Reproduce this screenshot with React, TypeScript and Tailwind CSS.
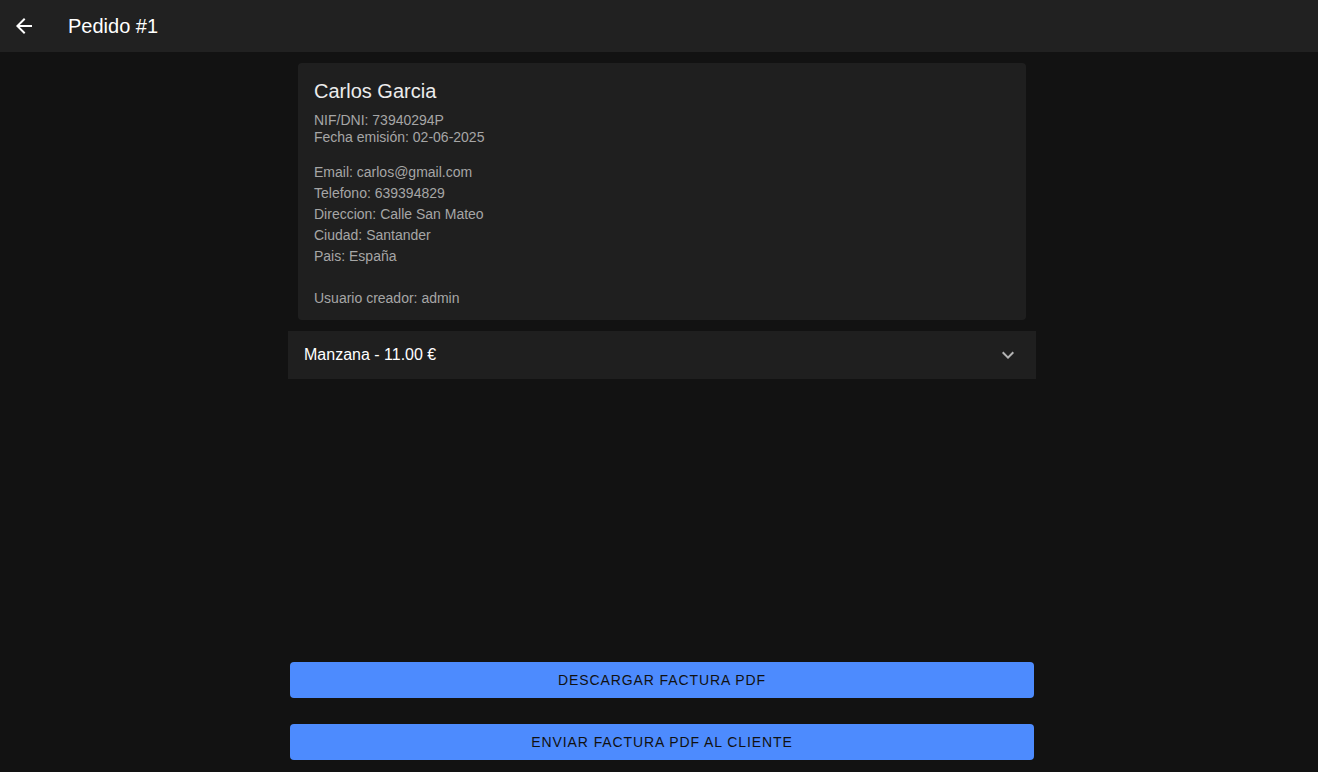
import React from 'react';

const ArrowBack = () => (
  <svg width="24" height="24" viewBox="0 0 24 24" fill="currentColor">
    <path d="M20 11H7.83l5.59-5.59L12 4l-8 8 8 8 1.41-1.41L7.83 13H20v-2z" />
  </svg>
);

const ExpandMore = () => (
  <svg width="24" height="24" viewBox="0 0 24 24" fill="currentColor">
    <path d="M16.59 8.59 12 13.17 7.41 8.59 6 10l6 6 6-6z" />
  </svg>
);

export default function App() {
  const contact = [
    'Email: carlos@gmail.com',
    'Telefono: 639394829',
    'Direccion: Calle San Mateo',
    'Ciudad: Santander',
    'Pais: España',
  ];

  return (
    <div className="h-screen flex flex-col bg-[#121212] text-white font-['Liberation_Sans',Arial,sans-serif]">
      {/* Top bar */}
      <header className="h-[52px] shrink-0 bg-[#212121] flex items-center pl-3">
        <button className="text-white">
          <ArrowBack />
        </button>
        <h1 className="ml-8 text-[20px]">Pedido #1</h1>
      </header>

      <main className="flex-1 flex justify-center pl-[6px]">
        <div className="w-[748px] flex flex-col">
          {/* Client card */}
          <section className="mx-[10px] mt-[11px] h-[257px] bg-[#1f1f1f] rounded-[4px] px-4 pt-4">
            <h2 className="text-[20px] leading-6 text-[#ececec]">Carlos Garcia</h2>
            <div className="mt-[9px] text-sm leading-[17px] text-[#a6a6a6]">
              <p>NIF/DNI: 73940294P</p>
              <p>Fecha emisión: 02-06-2025</p>
            </div>
            <div className="mt-4 text-sm leading-[21px] text-[#a6a6a6]">
              {contact.map((line) => (
                <p key={line}>{line}</p>
              ))}
              <p className="mt-[21px]">Usuario creador: admin</p>
            </div>
          </section>

          {/* Product accordion */}
          <div className="mt-[11px] h-12 bg-[#1f1f1f] flex items-center justify-between px-4">
            <span className="text-base">Manzana - 11.00 €</span>
            <span className="text-[#b3b3b3]">
              <ExpandMore />
            </span>
          </div>

          {/* Actions */}
          <div className="mt-auto mx-[2px] mb-3 flex flex-col gap-[26px]">
            <button className="h-9 rounded-[4px] bg-[#4d8bfe] text-[#111] text-sm tracking-[0.9px]">
              DESCARGAR FACTURA PDF
            </button>
            <button className="h-9 rounded-[4px] bg-[#4d8bfe] text-[#111] text-sm tracking-[0.9px]">
              ENVIAR FACTURA PDF AL CLIENTE
            </button>
          </div>
        </div>
      </main>
    </div>
  );
}
